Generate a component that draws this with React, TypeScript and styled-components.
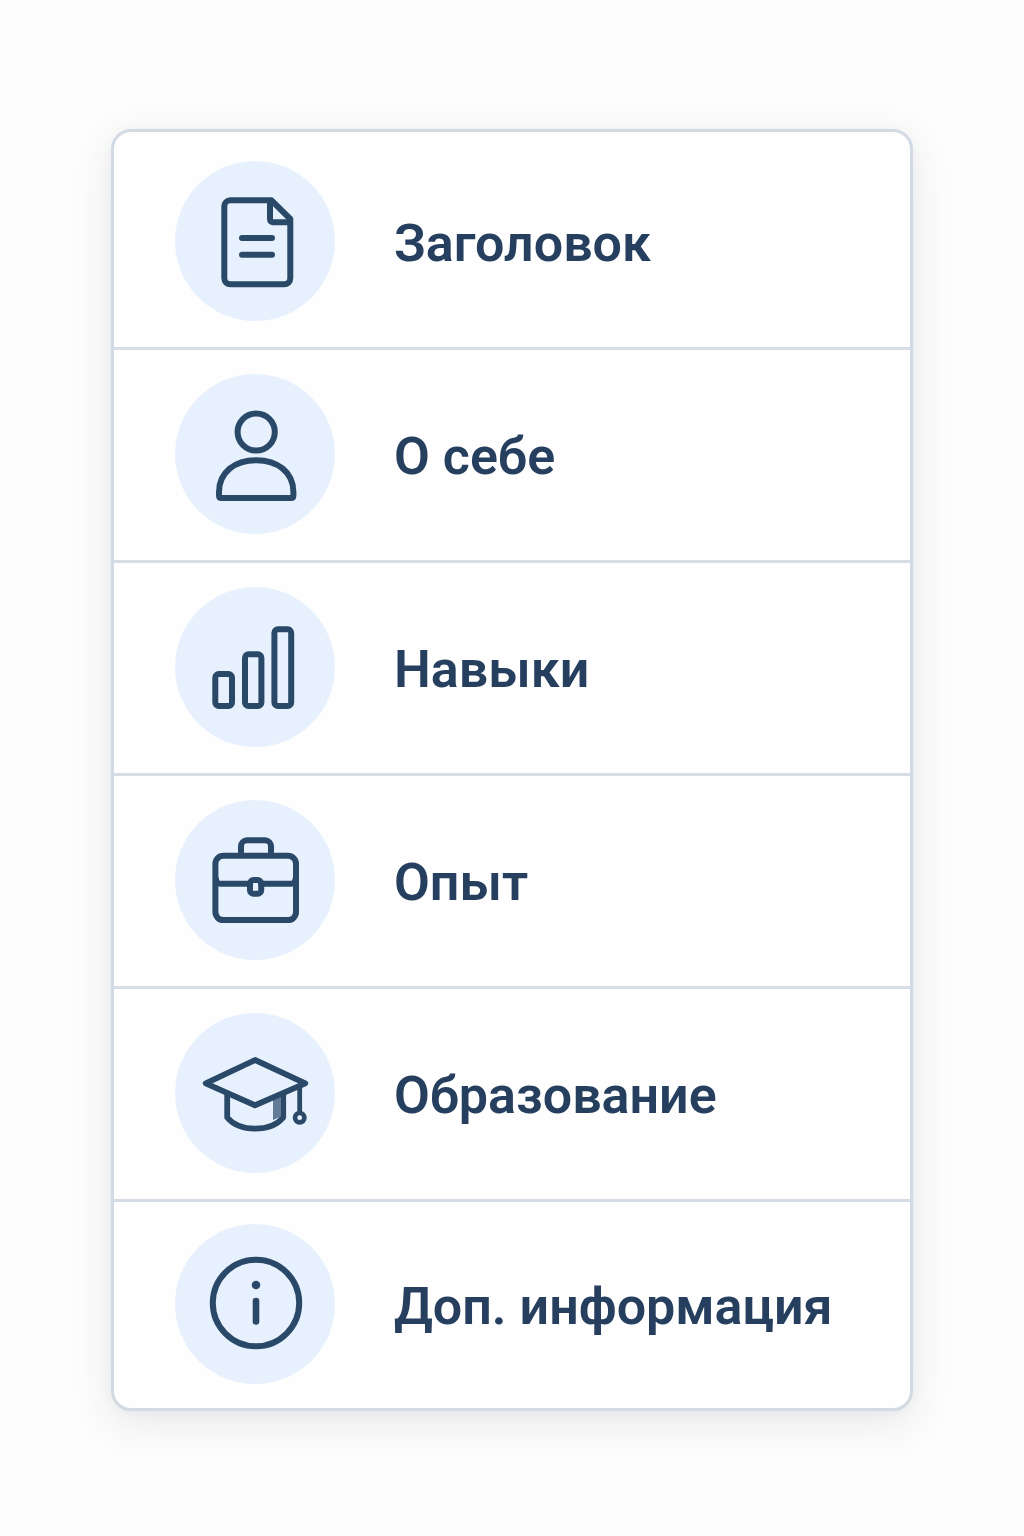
import React from "react";
import styled, { createGlobalStyle } from "styled-components";

const GlobalStyle = createGlobalStyle`
  *, *::before, *::after { box-sizing: border-box; }
  body {
    margin: 0;
    background: #fdfdfd;
    font-family: Roboto, Inter, "Noto Sans", sans-serif;
    color: #263f5e;
  }
`;

const Page = styled.main`
  padding: 129px 111px 125px 111px;
`;

const Card = styled.ul`
  list-style: none;
  margin: 0;
  padding: 5px 0 0;
  border: 3px solid #d2dae3;
  border-radius: 20px;
  background: #fefefe;
  box-shadow: 0 12px 44px rgba(40, 50, 65, 0.1), 0 2px 12px rgba(40, 50, 65, 0.04);
`;

const Row = styled.li`
  display: flex;
  align-items: center;
  gap: 59px;
  padding: 24px 24px 26px 61px;
  border-bottom: 3px solid #d6dde7;

  &:last-child {
    padding-top: 22px;
    padding-bottom: 24px;
    border-bottom: 0;
  }
`;

const Badge = styled.span`
  flex: none;
  width: 160px;
  height: 160px;
  border-radius: 50%;
  background: #e7f1fe;

  svg {
    display: block;
    width: 100%;
    height: 100%;
    fill: none;
    stroke: #2a4969;
    stroke-width: 6;
    stroke-linecap: round;
    stroke-linejoin: round;
  }
`;

const Label = styled.span`
  padding-top: 5px;
  font-size: 52px;
  line-height: 60px;
  font-weight: 600;
  white-space: nowrap;
`;

const DocumentIcon = () => (
  <svg viewBox="0 0 160 160" aria-hidden="true">
    <path d="M96.5 39.3H55.3a6 6 0 0 0-6 6v72a6 6 0 0 0 6 6h54a6 6 0 0 0 6-6V58Z" />
    <path d="M95 40.5v17.8a3 3 0 0 0 3 3h16.5M67 77h30M67 93.7h30" />
  </svg>
);

const PersonIcon = () => (
  <svg viewBox="0 0 160 160" aria-hidden="true">
    <circle cx="81.2" cy="58" r="18.6" />
    <path d="M46.5 124q-2.5 0-2.5-2.5V118C44 98 60 86.3 81.2 86.3S118.4 98 118.4 118v3.5q0 2.5-2.5 2.5Z" />
  </svg>
);

const BarsIcon = () => (
  <svg viewBox="0 0 160 160" aria-hidden="true">
    <rect x="40.3" y="87" width="16.7" height="32" rx="3.5" />
    <rect x="70" y="67.3" width="16.4" height="51.7" rx="3.5" />
    <rect x="99.4" y="42.3" width="16.8" height="76.7" rx="3.5" />
  </svg>
);

const BriefcaseIcon = () => (
  <svg viewBox="0 0 160 160" aria-hidden="true">
    <rect x="40.4" y="55.8" width="80.6" height="64.3" rx="8" />
    <path d="M66 55V46.3a6 6 0 0 1 6-6h18a6 6 0 0 1 6 6V55" />
    <path d="M41 79.5q0 4.2 4.2 4.2H75M86.2 83.7h30q4.2 0 4.2-4.2" />
    <rect x="75" y="80" width="11.2" height="13.7" rx="3.5" />
  </svg>
);

const GraduationIcon = () => (
  <svg viewBox="0 0 160 160" aria-hidden="true">
    <path d="M98 86.5l7-3V104l-7 3Z" fill="#617c98" stroke="none" />
    <path d="M80 47L30.7 70.3 80 92.3l50.3-22Z" strokeWidth="5.8" />
    <path d="M52.2 81v23.5C58 111.5 68 115.6 80 115.6s22.5-4.1 28.2-11.1V81" strokeWidth="5.8" />
    <path d="M124.7 73v25" strokeWidth="4.8" />
    <circle cx="124.7" cy="104.7" r="4.7" strokeWidth="4.6" />
  </svg>
);

const InfoIcon = () => (
  <svg viewBox="0 0 160 160" aria-hidden="true">
    <circle cx="81" cy="79" r="43.2" />
    <circle cx="81" cy="61" r="4.3" fill="#2a4969" stroke="none" />
    <path d="M81 77v20.5" strokeWidth="6.6" />
  </svg>
);

const sections = [
  { title: "Заголовок", Icon: DocumentIcon },
  { title: "О себе", Icon: PersonIcon },
  { title: "Навыки", Icon: BarsIcon },
  { title: "Опыт", Icon: BriefcaseIcon },
  { title: "Образование", Icon: GraduationIcon },
  { title: "Доп. информация", Icon: InfoIcon },
];

export default function App() {
  return (
    <>
      <GlobalStyle />
      <Page>
        <Card>
          {sections.map(({ title, Icon }) => (
            <Row key={title}>
              <Badge>
                <Icon />
              </Badge>
              <Label>{title}</Label>
            </Row>
          ))}
        </Card>
      </Page>
    </>
  );
}
